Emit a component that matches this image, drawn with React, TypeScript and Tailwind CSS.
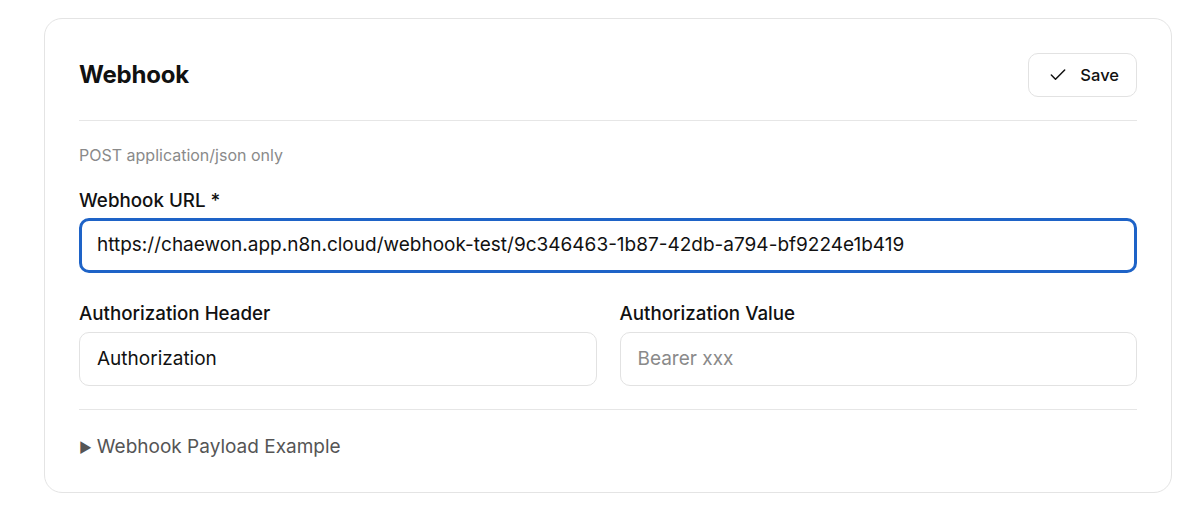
import { Check } from 'lucide-react';

export default function App() {
  return (
    <div className="min-h-screen bg-white pt-[18px] pl-[44px] pr-[28px] font-['Inter',sans-serif] text-[#111]">
      <div className="rounded-[18px] border border-[#e4e4e4] bg-white px-[34px] pt-[34px] pb-[30px]">
        <div className="flex items-center justify-between pb-[23px] border-b border-[#e6e6e6]">
          <h2 className="text-[24px] font-bold tracking-[-0.2px]">Webhook</h2>
          <button className="flex h-[44px] items-center gap-[12px] rounded-[10px] border border-[#e2e2e2] bg-white pl-[19px] pr-[17px] text-[16.5px] font-medium">
            <Check size={20} strokeWidth={1.8} />
            Save
          </button>
        </div>

        <p className="mt-[22px] text-[16px] text-[#8a8a8a]">POST application/json only</p>

        <label className="mt-[20px] block text-[18.75px] font-medium">Webhook URL *</label>
        <div className="mt-[3px] flex h-[55px] items-center rounded-[10px] border-[3px] border-[#1e63c7] px-[15px] text-[19px]">
          https://chaewon.app.n8n.cloud/webhook-test/9c346463-1b87-42db-a794-bf9224e1b419
        </div>

        <div className="mt-[27px] grid grid-cols-2 gap-[23px]">
          <div>
            <label className="block text-[18.75px] font-medium">Authorization Header</label>
            <div className="mt-[4px] flex h-[54px] items-center rounded-[10px] border border-[#e2e2e2] px-[17px] text-[19px]">
              Authorization
            </div>
          </div>
          <div>
            <label className="block text-[18.75px] font-medium">Authorization Value</label>
            <div className="mt-[4px] flex h-[54px] items-center rounded-[10px] border border-[#e2e2e2] px-[17px] text-[19px] text-[#8a8a8a]">
              Bearer xxx
            </div>
          </div>
        </div>

        <div className="mt-[23px] border-t border-[#e6e6e6] pt-[23px]">
          <div className="flex items-center gap-[5px] text-[19px] text-[#555]">
            <span className="text-[14px] leading-none">▶</span>
            Webhook Payload Example
          </div>
        </div>
      </div>
    </div>
  );
}
